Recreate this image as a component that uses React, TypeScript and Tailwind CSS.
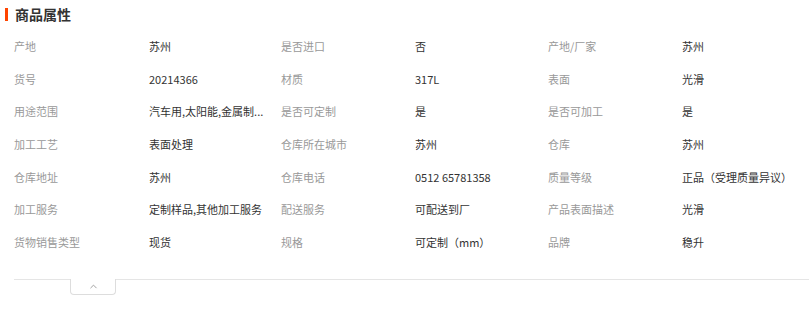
import { ChevronUp } from 'lucide-react';

type Attr = { label: string; value: string };

const attrs: Attr[] = [
  { label: '产地', value: '苏州' },
  { label: '是否进口', value: '否' },
  { label: '产地/厂家', value: '苏州' },
  { label: '货号', value: '20214366' },
  { label: '材质', value: '317L' },
  { label: '表面', value: '光滑' },
  { label: '用途范围', value: '汽车用,太阳能,金属制...' },
  { label: '是否可定制', value: '是' },
  { label: '是否可加工', value: '是' },
  { label: '加工工艺', value: '表面处理' },
  { label: '仓库所在城市', value: '苏州' },
  { label: '仓库', value: '苏州' },
  { label: '仓库地址', value: '苏州' },
  { label: '仓库电话', value: '0512 65781358' },
  { label: '质量等级', value: '正品（受理质量异议）' },
  { label: '加工服务', value: '定制样品,其他加工服务' },
  { label: '配送服务', value: '可配送到厂' },
  { label: '产品表面描述', value: '光滑' },
  { label: '货物销售类型', value: '现货' },
  { label: '规格', value: '可定制（mm）' },
  { label: '品牌', value: '稳升' },
];

const App = () => {
  return (
    <div
      className="w-[809px] h-[310px] overflow-hidden bg-white"
      style={{ fontFamily: '"Noto Sans CJK SC", "Noto Sans", sans-serif' }}
    >
      <div className="flex items-center h-[12px] mt-[8px] ml-[5px]">
        <span className="w-[3px] h-[13px] bg-[#ff4400]" />
        <h2 className="ml-[7px] text-[14px] font-bold leading-none text-[#333]">
          商品属性
        </h2>
      </div>
      <div className="ml-[14px] mt-[10px] grid grid-cols-[135px_132px_134px_133px_134px_1fr] text-[11px]">
        {attrs.map((a) => (
          <div key={a.label} className="contents">
            <div className="h-[32.67px] flex items-center text-[#999] whitespace-nowrap">
              {a.label}
            </div>
            <div className="h-[32.67px] flex items-center text-[#333] whitespace-nowrap">
              {a.value}
            </div>
          </div>
        ))}
      </div>
      <div className="ml-[14px] mt-[20px] border-t border-[#e5e5e5] relative">
        <button className="absolute left-[56px] top-[-1px] w-[46px] h-[16px] bg-white border border-t-0 border-[#ddd] rounded-b-[4px] flex items-start justify-center pt-[2px]">
          <ChevronUp size={11} strokeWidth={2} className="text-[#999]" />
        </button>
      </div>
    </div>
  );
};

export default App;
